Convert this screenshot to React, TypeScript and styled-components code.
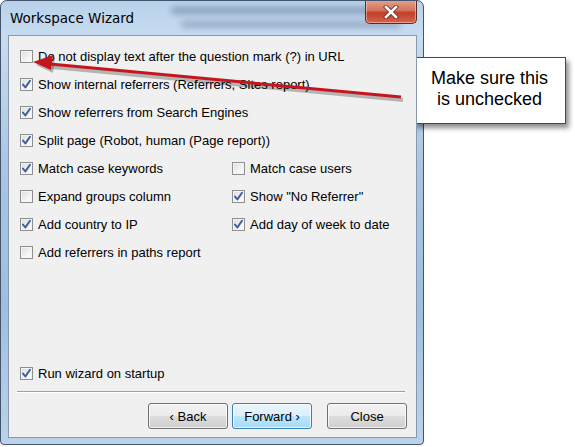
import React from 'react';
import styled, { createGlobalStyle } from 'styled-components';

const GlobalStyle = createGlobalStyle`
  body {
    margin: 0;
    background: #ffffff;
    font-family: 'Liberation Sans', Arial, sans-serif;
  }
`;

const Page = styled.div`
  position: relative;
  width: 575px;
  height: 447px;
  overflow: hidden;
`;

const Window = styled.div`
  position: relative;
  width: 424px;
  height: 445px;
  box-sizing: border-box;
  border: 1px solid #44546a;
  border-radius: 7px 7px 4px 4px;
  background: linear-gradient(180deg, #b9d1ea 0%, #c7dcf0 8%, #a8c4e2 40%, #9fbfe0 70%, #bcd3ea 100%);
  display: flex;
  flex-direction: column;
  padding: 0 6px 6px 7px;
  overflow: hidden;

  &::before {
    content: '';
    position: absolute;
    left: 170px;
    top: 6px;
    width: 210px;
    height: 7px;
    border-radius: 4px;
    background: rgba(40, 60, 100, 0.35);
    filter: blur(3px);
  }
  &::after {
    content: '';
    position: absolute;
    left: 180px;
    top: 20px;
    width: 220px;
    height: 7px;
    border-radius: 4px;
    background: rgba(40, 60, 100, 0.28);
    filter: blur(3px);
  }
`;

const TitleBar = styled.div`
  position: relative;
  z-index: 1;
  height: 34px;
  display: flex;
  align-items: flex-start;
`;

const Title = styled.div`
  margin-top: 9px;
  margin-left: 2px;
  font-family: 'DejaVu Sans', sans-serif;
  font-size: 13.5px;
  color: #000;
`;

const CloseButton = styled.div`
  margin-left: auto;
  margin-top: -1px;
  width: 52px;
  height: 24px;
  box-sizing: border-box;
  border: 1px solid #5a2a24;
  border-top: none;
  border-radius: 0 0 5px 5px;
  background: linear-gradient(180deg, #e6a18f 0%, #d4735e 45%, #c0402a 55%, #d8624a 100%);
  display: flex;
  align-items: center;
  justify-content: center;
  box-shadow: inset 0 0 0 1px rgba(255, 220, 210, 0.5);
`;

const Client = styled.div`
  flex: 1;
  position: relative;
  z-index: 1;
  background: #f0f0f0;
  border: 1px solid #8799b0;
  display: flex;
  flex-direction: column;
  padding: 13px 9px 8px 11px;
`;

const OptionGrid = styled.div`
  display: grid;
  grid-template-columns: 212px 1fr;
  grid-auto-rows: 28px;
`;

const Option = styled.label<{ $wide?: boolean }>`
  display: flex;
  align-items: flex-start;
  gap: 5px;
  grid-column: ${p => (p.$wide ? '1 / span 2' : 'auto')};
  font-size: 13px;
  color: #000;
  line-height: 15px;
  white-space: nowrap;
`;

const Box = styled.span`
  width: 13px;
  height: 13px;
  box-sizing: border-box;
  border: 1px solid #8e8f8f;
  background: linear-gradient(135deg, #dcdcdc 0%, #f4f4f4 60%, #ffffff 100%);
  box-shadow: inset 0 0 0 1px #f4f4f4;
  display: flex;
  align-items: center;
  justify-content: center;
  flex-shrink: 0;
  margin-top: 1px;
`;

const Spacer = styled.div`
  flex: 1;
`;

const Separator = styled.div`
  height: 1px;
  background: #a0a0a0;
  border-bottom: 1px solid #ffffff;
  margin: 10px 0 10px -3px;
  width: 388px;
`;

const ButtonRow = styled.div`
  display: flex;
  justify-content: flex-end;
`;

const Button = styled.button<{ $focused?: boolean; $gap?: number }>`
  width: 80px;
  height: 26px;
  margin-left: ${p => p.$gap ?? 0}px;
  box-sizing: border-box;
  border: 1px solid ${p => (p.$focused ? '#3c7fb1' : '#707070')};
  border-radius: 3px;
  background: ${p =>
    p.$focused
      ? 'linear-gradient(180deg, #eaf6fd 0%, #d9f0fc 50%, #bee6fd 51%, #a7d9f5 100%)'
      : 'linear-gradient(180deg, #f2f2f2 0%, #ebebeb 50%, #dddddd 51%, #cfcfcf 100%)'};
  box-shadow: inset 0 0 0 1px rgba(255, 255, 255, 0.75);
  font-family: 'Liberation Sans', Arial, sans-serif;
  font-size: 13px;
  color: #000;
  padding: 0;
`;

const Callout = styled.div`
  position: absolute;
  left: 413px;
  top: 57px;
  width: 153px;
  height: 67px;
  box-sizing: border-box;
  border: 1px solid #3e4b58;
  background: #ffffff;
  box-shadow: 3px 4px 5px rgba(0, 0, 0, 0.45);
  display: flex;
  align-items: center;
  justify-content: center;
  text-align: center;
  font-size: 18px;
  line-height: 21px;
  color: #000;
  padding-bottom: 4px;
`;

const ArrowLayer = styled.svg`
  position: absolute;
  left: 0;
  top: 0;
  width: 575px;
  height: 447px;
  z-index: 5;
  pointer-events: none;
`;

const Check = () => (
  <svg width="11" height="11" viewBox="0 0 11 11">
    <path d="M2 5.6 L4.4 8.4 L9 1.8" fill="none" stroke="#42609e" strokeWidth="2" strokeLinecap="round" strokeLinejoin="round" />
  </svg>
);

const CheckOption: React.FC<{ label: string; checked?: boolean; wide?: boolean }> = ({ label, checked, wide }) => (
  <Option $wide={wide}>
    <Box>{checked ? <Check /> : null}</Box>
    {label}
  </Option>
);

export default function App() {
  return (
    <Page>
      <GlobalStyle />
      <Window>
        <TitleBar>
          <Title>Workspace Wizard</Title>
          <CloseButton>
            <svg width="16" height="14" viewBox="0 0 16 14">
              <path d="M3 2 L13 12 M13 2 L3 12" stroke="#6a2a20" strokeWidth="4.2" strokeLinecap="square" />
              <path d="M3 2 L13 12 M13 2 L3 12" stroke="#ffffff" strokeWidth="2.6" strokeLinecap="square" />
            </svg>
          </CloseButton>
        </TitleBar>
        <Client>
          <OptionGrid>
            <CheckOption wide label="Do not display text after the question mark (?) in URL" />
            <CheckOption wide checked label="Show internal referrers (Referrers, Sites report)" />
            <CheckOption wide checked label="Show referrers from Search Engines" />
            <CheckOption wide checked label="Split page (Robot, human (Page report))" />
            <CheckOption checked label="Match case keywords" />
            <CheckOption label="Match case users" />
            <CheckOption label="Expand groups column" />
            <CheckOption checked label={'Show "No Referrer"'} />
            <CheckOption checked label="Add country to IP" />
            <CheckOption checked label="Add day of week to date" />
            <CheckOption wide label="Add referrers in paths report" />
          </OptionGrid>
          <Spacer />
          <CheckOption checked label="Run wizard on startup" />
          <Separator />
          <ButtonRow>
            <Button>‹ Back</Button>
            <Button $focused $gap={4}>Forward ›</Button>
            <Button $gap={15}>Close</Button>
          </ButtonRow>
        </Client>
      </Window>
      <Callout>
        Make sure this
        <br />
        is unchecked
      </Callout>
      <ArrowLayer viewBox="0 0 575 447">
        <line x1="403" y1="100" x2="52" y2="67" stroke="rgba(0,0,0,0.25)" strokeWidth="4" />
        <path d="M36 65 L55 58 L53 73 Z" fill="rgba(0,0,0,0.25)" />
        <line x1="401" y1="97" x2="50" y2="64" stroke="#c4161c" strokeWidth="3" />
        <path d="M33 62 L53 55 L51 70 Z" fill="#c4161c" />
      </ArrowLayer>
    </Page>
  );
}
